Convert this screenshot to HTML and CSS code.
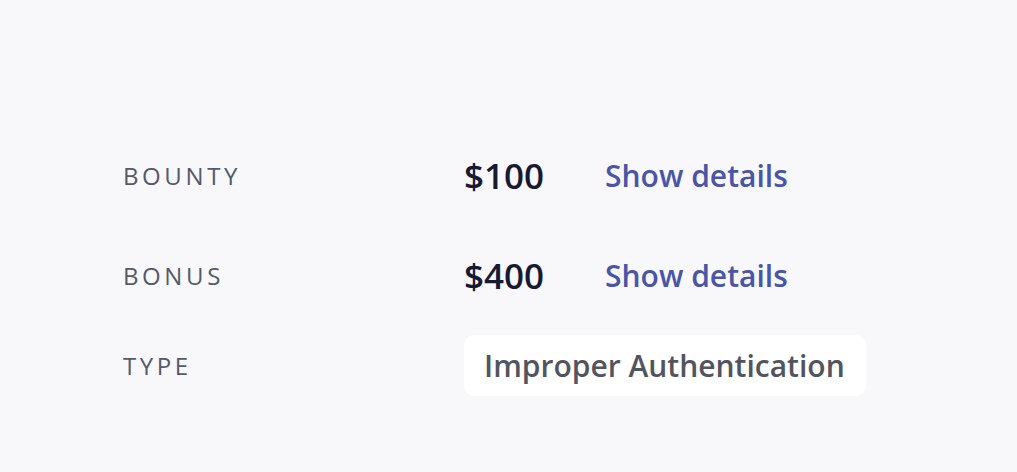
FILE: index.html
```html
<!DOCTYPE html>
<html>
<head>
<meta charset="utf-8">
<link rel="stylesheet" href="styles.css">
</head>
<body>
<div class="panel">
  <div class="row">
    <div class="label">Bounty</div>
    <div class="value"><span class="amount">$100</span><a class="link" href="#">Show details</a></div>
  </div>
  <div class="row">
    <div class="label">Bonus</div>
    <div class="value"><span class="amount">$400</span><a class="link" href="#">Show details</a></div>
  </div>
  <div class="row row-tag">
    <div class="label">Type</div>
    <div class="value"><span class="tag">Improper Authentication</span></div>
  </div>
</div>
</body>
</html>
```
FILE: styles.css
```css
html, body {
  margin: 0;
  padding: 0;
  background: #f8f8fb;
  font-family: "Open Sans", sans-serif;
}
.panel {
  padding: 125px 0 0 123px;
  display: flex;
  flex-direction: column;
}
.row {
  display: flex;
  align-items: center;
  height: 100px;
}
.row-tag {
  height: 80px;
}
.label {
  width: 341px;
  font-size: 24px;
  letter-spacing: 3.6px;
  text-transform: uppercase;
  color: #55596a;
}
.value {
  display: flex;
  align-items: center;
  gap: 61px;
}
.amount {
  font-size: 35px;
  font-weight: 600;
  color: #171a33;
}
.link {
  font-size: 30px;
  font-weight: 600;
  color: #4a55a7;
  text-decoration: none;
}
.tag {
  background: #fff;
  border-radius: 10px;
  padding: 10px 21px 10px 20px;
  font-size: 30px;
  font-weight: 600;
  color: #52545f;
}
```
